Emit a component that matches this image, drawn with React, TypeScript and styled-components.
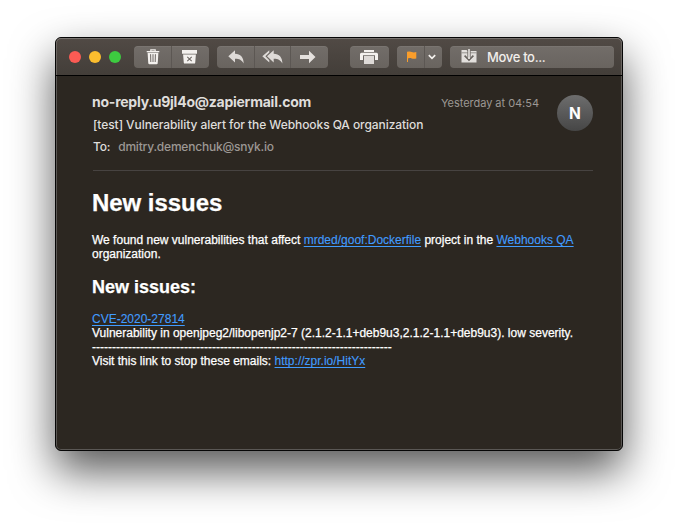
import React from "react";
import styled, { createGlobalStyle } from "styled-components";

const GlobalStyle = createGlobalStyle`
  * { box-sizing: border-box; }
  html, body { margin: 0; background: #fff; overflow: hidden; }
`;

const Desktop = styled.div`
  width: 678px;
  height: 524px;
  padding: 37px 55px 73px;
  background: #fff;
`;

const Window = styled.main`
  display: flex;
  flex-direction: column;
  height: 414px;
  border: 1px solid #060606;
  border-radius: 6px;
  overflow: hidden;
  background: #2c2721;
  box-shadow: 0 20px 44px rgba(0, 0, 0, 0.66), inset 0 0 0 1px #5a5754;
`;

const Toolbar = styled.header`
  display: flex;
  align-items: center;
  height: 38px;
  flex: none;
  padding: 1px 8px 0 13px;
  background: linear-gradient(#514a45, #433e39);
  border-bottom: 1px solid #000;
  border-radius: 5px 5px 0 0;
  box-shadow: inset 0 1px #77726e, inset 1px 0 #6a6561, inset -1px 0 #6a6561;
`;

const Lights = styled.div`
  display: flex;
  gap: 8px;
  margin-right: 13px;
`;

const Light = styled.i<{ $color: string }>`
  width: 12px;
  height: 12px;
  border-radius: 50%;
  background: ${(p) => p.$color};
`;

const Group = styled.div<{ $gap: number }>`
  display: flex;
  height: 22px;
  margin-right: ${(p) => p.$gap}px;
  border-radius: 4px;
  overflow: hidden;
  background: linear-gradient(#726d69, #69645f);
  box-shadow: inset 0 1px rgba(255, 255, 255, 0.06);
`;

const Tool = styled.button<{ $width: number; $inset: number }>`
  display: flex;
  align-items: center;
  gap: 10px;
  width: ${(p) => p.$width}px;
  height: 22px;
  padding: 0 0 0 ${(p) => p.$inset}px;
  border: 0;
  background: none;
  color: #f1eeeb;
  font: 500 13px Inter, sans-serif;
  letter-spacing: -0.33px;
  & + & { box-shadow: inset 1px 0 #5c5753; }
  svg { display: block; flex: none; }
`;

const Message = styled.article`
  display: flex;
  flex-direction: column;
  padding: 18px 29px 0 36px;
`;

const Envelope = styled.header`
  display: flex;
  height: 77px;
  border-bottom: 1px solid #474341;
  margin-left: 1px;
`;

const Addressing = styled.div`
  flex: 1;
  color: #dfdddb;
  font: 500 12px/22px Inter, sans-serif;
  white-space: nowrap;
`;

const Sender = styled.div`
  height: 20px;
  margin-left: -1px;
  font-size: 14px;
  font-weight: 650;
  line-height: 16px;
  letter-spacing: -0.24px;
`;

const Subject = styled.div`
  height: 22px;
  letter-spacing: -0.072px;
`;

const Recipient = styled.div`
  display: flex;
  gap: 8px;
  letter-spacing: -0.2px;
  span:last-child { color: #9c9894; }
`;

const Sent = styled.time`
  margin-right: 18px;
  color: #9c9894;
  font: 400 11px/18px Inter, sans-serif;
  letter-spacing: -0.03px;
  white-space: nowrap;
`;

const Avatar = styled.div`
  display: grid;
  place-items: center;
  width: 36px;
  height: 36px;
  margin-top: 1px;
  border-radius: 50%;
  background: linear-gradient(#6d6d6d, #464646);
  color: #fff;
  font: 700 15.5px Inter, sans-serif;
`;

const Body = styled.section`
  color: #fff;
  font: 12px/14px "Liberation Sans", Helvetica, sans-serif;
  white-space: nowrap;
  -webkit-text-stroke: 0.25px;
`;

const Title = styled.h1`
  margin: 17px 0 16px;
  font-size: 24px;
  line-height: 29px;
  letter-spacing: -0.05px;
`;

const Subtitle = styled.h2`
  margin: 15px 0 14px;
  font-size: 18px;
  line-height: 22px;
`;

const Line = styled.div`
  height: 14px;
`;

const Link = styled.a`
  color: #419cff;
  text-decoration: underline;
  text-underline-offset: 1.5px;
  text-decoration-thickness: 1px;
  -webkit-text-stroke: 0.1px;
`;

const TrashIcon = () => (
  <svg width="14" height="16" viewBox="0 0 14 16" fill="none" stroke="#f4f1ee">
    <path d="M.7 2.6h12.6M4.8 2.2V.8h4.4v1.4" strokeWidth="1.2" />
    <path fill="#f4f1ee" stroke="none" d="M1.6 3.8h10.8l-.7 10.4q-.1 1-1.1 1H3.4q-1 0-1.1-1z" />
    <path stroke="#6e6965" d="M4.6 5.2 4.8 13M7 5.2V13M9.4 5.2 9.2 13" />
  </svg>
);

const ArchiveIcon = () => (
  <svg width="15" height="14" viewBox="0 0 15 14">
    <path fill="#f4f1ee" d="M0 0h15v3.8H0zM1.1 4.4h12.8l-.7 8.3q-.1.9-1 .9H2.8q-.9 0-1-.9z" />
    <path stroke="#6e6965" strokeWidth="1.1" d="m5.3 6.8 4.4 4.4m0-4.4-4.4 4.4" />
  </svg>
);

const ReplyIcon = () => (
  <svg width="16" height="14" viewBox="0 0 16 14" fill="#dedad7">
    <path d="M7 .2v3.6c5.6.2 8.6 3.3 8.7 9.8-2.2-3.8-4.7-4.9-8.7-4.8v3.7L.3 6.3z" />
  </svg>
);

const ReplyAllIcon = () => (
  <svg width="21" height="14" viewBox="0 0 21 14" fill="#dedad7">
    <path d="M11.7.2v3.6c5.6.2 8.6 3.3 8.7 9.8-2.2-3.8-4.7-4.9-8.7-4.8v3.7L5 6.3z" />
    <path d="M7.3.2v2.3L3.4 6.3l3.9 3.9v2.3L.3 6.3z" />
  </svg>
);

const ForwardIcon = () => (
  <svg width="16" height="14" viewBox="0 0 16 14" fill="#e5e1de">
    <path d="M0 5h9V.8L15.5 7 9 13.2V9H0z" />
  </svg>
);

const PrintIcon = () => (
  <svg width="18" height="16" viewBox="0 0 18 16">
    <path fill="#f4f1ee" d="M4 1h10v2H4zM1.5 3.7h15Q18 3.7 18 5.2V11h-3V6.2H3V11H0V5.2Q0 3.7 1.5 3.7z" />
    <path fill="#dedad7" d="M4 7h10v8H4z" />
  </svg>
);

const FlagIcon = () => (
  <svg width="11" height="12" viewBox="0 0 11 12" fill="#f99d2b">
    <path d="M1 .7h1V11H1z" />
    <path d="M1.5 1c1.6-.7 2.8-.6 4.2 0 1.4.5 2.8.5 4.6 0v6.4c-1.8.6-3.2.6-4.6.1-1.4-.6-2.6-.6-4.2.1z" />
  </svg>
);

const ChevronIcon = () => (
  <svg width="8" height="6" viewBox="0 0 8 6" fill="none" stroke="#f4f1ee" strokeWidth="1.7">
    <path d="M.8 1.2 4 4.3l3.2-3.1" />
  </svg>
);

const MoveIcon = () => (
  <svg width="16" height="16" viewBox="0 0 16 16">
    <path fill="#e2dfdc" d="M.5 1h5l1 1h9v11.5H.5z" />
    <path stroke="#77726e" d="M.5 3.8h15" strokeWidth=".7" />
    <path fill="none" stroke="#77726e" strokeWidth="3.4" d="M8 .5v8" />
    <path fill="none" stroke="#68635f" strokeWidth="1.6" d="M3.6 6.6 8 11.1l4.4-4.5" />
    <path stroke="#f4f1ee" strokeWidth="1.4" d="M8 0v10" />
  </svg>
);

export default function App() {
  return (
    <>
      <GlobalStyle />
      <Desktop>
        <Window>
          <Toolbar>
            <Lights>
              <Light $color="#fb5b54" />
              <Light $color="#fbbd2e" />
              <Light $color="#3dcb40" />
            </Lights>
            <Group $gap={8}>
              <Tool $width={37} $inset={12} aria-label="Delete"><TrashIcon /></Tool>
              <Tool $width={38} $inset={11} aria-label="Archive"><ArchiveIcon /></Tool>
            </Group>
            <Group $gap={22}>
              <Tool $width={37} $inset={11} aria-label="Reply"><ReplyIcon /></Tool>
              <Tool $width={36} $inset={8} aria-label="Reply all"><ReplyAllIcon /></Tool>
              <Tool $width={38} $inset={10} aria-label="Forward"><ForwardIcon /></Tool>
            </Group>
            <Group $gap={8}>
              <Tool $width={39} $inset={10} aria-label="Print"><PrintIcon /></Tool>
            </Group>
            <Group $gap={8}>
              <Tool $width={27} $inset={9} aria-label="Flag"><FlagIcon /></Tool>
              <Tool $width={18} $inset={4} aria-label="Flag options"><ChevronIcon /></Tool>
            </Group>
            <Group $gap={0}>
              <Tool $width={164} $inset={11}><MoveIcon />Move to...</Tool>
            </Group>
          </Toolbar>
          <Message>
            <Envelope>
              <Addressing>
                <Sender>no-reply.u9jl4o@zapiermail.com</Sender>
                <Subject>[test] Vulnerability alert for the Webhooks QA organization</Subject>
                <Recipient><span>To:</span><span>dmitry.demenchuk@snyk.io</span></Recipient>
              </Addressing>
              <Sent>Yesterday at 04:54</Sent>
              <Avatar>N</Avatar>
            </Envelope>
            <Body>
              <Title>New issues</Title>
              <Line>
                We found new vulnerabilities that affect <Link>mrded/goof:Dockerfile</Link> project in the <Link>Webhooks QA</Link>
              </Line>
              <Line>organization.</Line>
              <Subtitle>New issues:</Subtitle>
              <Line><Link>CVE-2020-27814</Link></Line>
              <Line>Vulnerability in openjpeg2/libopenjp2-7 (2.1.2-1.1+deb9u3,2.1.2-1.1+deb9u3). low severity.</Line>
              <Line>{"-".repeat(75)}</Line>
              <Line>Visit this link to stop these emails: <Link>http://zpr.io/HitYx</Link></Line>
            </Body>
          </Message>
        </Window>
      </Desktop>
    </>
  );
}
